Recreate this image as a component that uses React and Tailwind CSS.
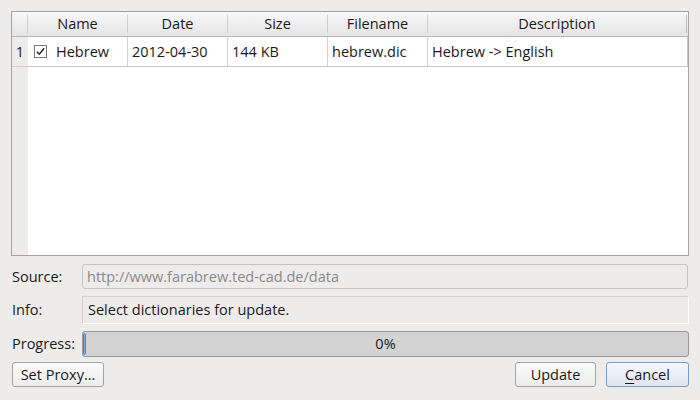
import React from 'react'

const cols = [
  { name: 'Name', w: 'w-[100px]' },
  { name: 'Date', w: 'w-[100px]' },
  { name: 'Size', w: 'w-[100px]' },
  { name: 'Filename', w: 'w-[100px]' },
  { name: 'Description', w: 'flex-1' },
]

const row = ['Hebrew', '2012-04-30', '144 KB', 'hebrew.dic', 'Hebrew -> English']

function CheckBox() {
  return (
    <span className="w-[13px] h-[13px] border border-[#7a7a7a] bg-white flex items-center justify-center shrink-0">
      <svg viewBox="0 0 12 12" className="w-[11px] h-[11px]">
        <path d="M2 6.2 L4.7 9 L10 2.5" fill="none" stroke="#222" strokeWidth="1.5" />
      </svg>
    </span>
  )
}

function Button({ children, primary, className = '' }) {
  return (
    <button
      className={`h-[25px] rounded-[3px] border text-[14.5px] text-[#1a1a1a] ${
        primary
          ? 'border-[#7a9ccc] bg-gradient-to-b from-[#f4f7fb] to-[#dfe6f0]'
          : 'border-[#a5a5a5] bg-gradient-to-b from-[#fbfbfb] to-[#ececec]'
      } ${className}`}
    >
      {children}
    </button>
  )
}

export default function App() {
  return (
    <div
      className="w-[700px] h-[400px] bg-[#edeceb] text-[14.5px] text-[#1a1a1a] px-[11px] pt-[11px] flex flex-col"
      style={{ fontFamily: '"Open Sans", sans-serif' }}
    >
      <div className="h-[245px] border border-[#a3a3a3] bg-white flex flex-col">
        <div className="flex h-[25px] border-b border-[#b8b8b8] bg-gradient-to-b from-[#f8f8f8] to-[#e4e4e4]">
          <div className="w-[16px] border-r border-[#cfcfcf] my-[3px]" />
          {cols.map((c, i) => (
            <div
              key={c.name}
              className={`${c.w} flex items-center justify-center ${i < cols.length - 1 ? 'border-r border-[#cfcfcf]' : 'border-r border-[#bdbdbd] mr-[1px]'} my-[3px]`}
            >
              {c.name}
            </div>
          ))}
        </div>
        <div className="flex-1 flex">
          <div className="w-[16px] bg-[#edeceb] flex flex-col">
            <div className="h-[30px] flex items-center justify-center border-b border-[#cfcfcf]">1</div>
          </div>
          <div className="flex-1 flex flex-col">
            <div className="flex h-[30px] border-b border-[#c8c8c8] border-r border-r-[#c8c8c8]">
              {row.map((v, i) => (
                <div
                  key={i}
                  className={`${cols[i].w} flex items-center ${i === 0 ? 'pl-[6px] gap-[9px]' : 'px-[4px]'} ${i < row.length - 1 ? 'border-r border-[#d2d2d2]' : ''}`}
                >
                  {i === 0 && <CheckBox />}
                  <span>{v}</span>
                </div>
              ))}
            </div>
          </div>
        </div>
      </div>

      <div className="flex items-center mt-[8px] h-[25px]">
        <span className="w-[72px] pl-[1px]">Source:</span>
        <div className="flex-1 h-[25px] rounded-[3px] border border-[#c4c4c4] bg-[#edeceb] flex items-center px-[4px] text-[#8a8a8a] ml-[-1px] mr-[1px]">
          http://www.farabrew.ted-cad.de/data
        </div>
      </div>

      <div className="flex items-center mt-[7px] h-[28px]">
        <span className="w-[71px] pl-[1px]">Info:</span>
        <div className="flex-1 h-[28px] border border-[#cfcfcf] border-b-white border-r-white flex items-center px-[5px]">
          Select dictionaries for update.
        </div>
      </div>

      <div className="flex items-center mt-[7px] h-[26px]">
        <span className="w-[71px] pl-[1px]">Progress:</span>
        <div className="relative flex-1 h-[26px] rounded-[3px] border border-[#9a9a9a] bg-[#d3d3d3] flex items-center justify-center">
          <div className="absolute left-[0px] top-[1px] bottom-[1px] w-[3px] rounded-[2px] bg-[#7ea3d6] border border-[#5a82c0]" />
          0%
        </div>
      </div>

      <div className="flex items-center mt-[5px] pl-[1px]">
        <Button className="w-[92px]">Set Proxy...</Button>
        <div className="flex-1" />
        <Button className="w-[81px]">Update</Button>
        <Button primary className="w-[83px] ml-[10px]">
          <span className="underline underline-offset-[3px]">C</span>ancel
        </Button>
      </div>
    </div>
  )
}
